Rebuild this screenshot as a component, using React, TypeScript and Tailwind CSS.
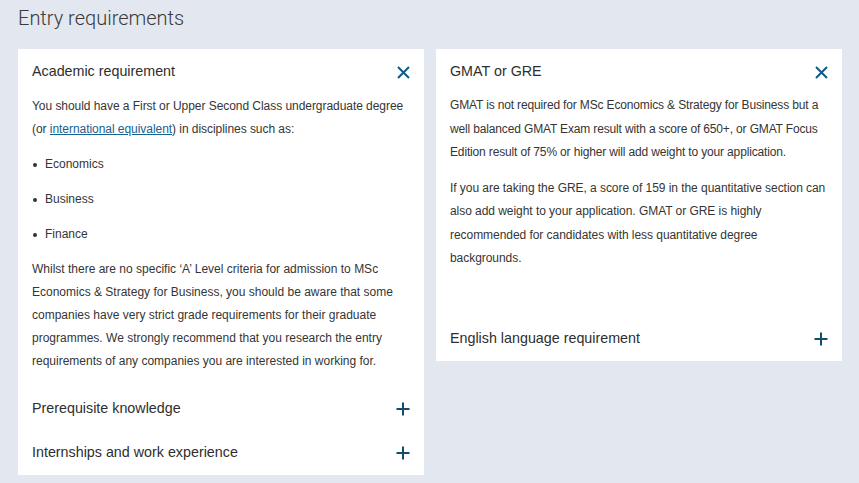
import React from 'react';

const XIcon = () => (
  <svg width="13" height="13" viewBox="0 0 13 13" className="shrink-0">
    <path d="M1 1 L12 12 M12 1 L1 12" stroke="#0f5b86" strokeWidth="2" fill="none" />
  </svg>
);

const PlusIcon = () => (
  <svg width="14" height="14" viewBox="0 0 14 14" className="shrink-0">
    <path d="M7 0.5 V13.5 M0.5 7 H13.5" stroke="#134d6e" strokeWidth="2" fill="none" />
  </svg>
);

const AccordionHeader = ({ title, open }: { title: string; open?: boolean }) => (
  <div className="flex items-center justify-between h-[44px]">
    <span className="text-[14.3px] text-[#2e2e2e]">{title}</span>
    {open ? <XIcon /> : <PlusIcon />}
  </div>
);

const App = () => {
  const subjects = ['Economics', 'Business', 'Finance'];

  return (
    <div
      className="min-h-[483px] bg-[#e3e8f0] pl-[18px] pr-[17px] pt-[4px] pb-[9px]"
      style={{ fontFamily: '"Liberation Sans", Arial, sans-serif' }}
    >
      <h2 className="text-[20px] font-light text-[#3a3a3a] h-[28px] leading-[28px] mb-[17px]" style={{ fontFamily: 'Roboto, "Liberation Sans", sans-serif' }}>
        Entry requirements
      </h2>

      <div className="grid grid-cols-2 gap-[12px] items-start">
        {/* Left card */}
        <div className="bg-white px-[14px] pt-[1px]">
          <AccordionHeader title="Academic requirement" open />
          <div className="text-[12px] leading-[23px] text-[#353535] mt-[1px]">
            <p className="tracking-[-0.05px]">
              You should have a First or Upper Second Class undergraduate degree (or{' '}
              <a href="#" className="text-[#17618f] underline">international equivalent</a>) in disciplines such as:
            </p>
            <ul className="mt-[12px] flex flex-col gap-[12px]">
              {subjects.map((s) => (
                <li key={s} className="flex items-center">
                  <span className="w-[4px] h-[4px] rounded-full bg-[#333] ml-[1px] mr-[8px]" />
                  {s}
                </li>
              ))}
            </ul>
            <p className="mt-[12px]">
              Whilst there are no specific ‘A’ Level criteria for admission to MSc Economics &amp; Strategy for Business, you should be aware that some companies have very strict grade requirements for their graduate programmes. We strongly recommend that you research the entry requirements of any companies you are interested in working for.
            </p>
          </div>
          <div className="mt-[13px]">
            <div className="h-[45px] flex flex-col justify-center">
              <AccordionHeader title="Prerequisite knowledge" />
            </div>
            <div className="h-[44px] flex flex-col justify-center">
              <AccordionHeader title="Internships and work experience" />
            </div>
          </div>
        </div>

        {/* Right card */}
        <div className="bg-white px-[14px] pt-[1px]">
          <AccordionHeader title="GMAT or GRE" open />
          <div className="text-[12px] leading-[23.5px] text-[#353535]">
            <p className="tracking-[-0.15px]">
              GMAT is not required for MSc Economics &amp; Strategy for Business but a well balanced GMAT Exam result with a score of 650+, or GMAT Focus Edition result of 75% or higher will add weight to your application.
            </p>
            <p className="mt-[12px] tracking-[-0.05px]">
              If you are taking the GRE, a score of 159 in the quantitative section can also add weight to your application. GMAT or GRE is highly recommended for candidates with less quantitative degree backgrounds.
            </p>
          </div>
          <div className="mt-[46px]">
            <AccordionHeader title="English language requirement" />
          </div>
        </div>
      </div>
    </div>
  );
};

export default App;
